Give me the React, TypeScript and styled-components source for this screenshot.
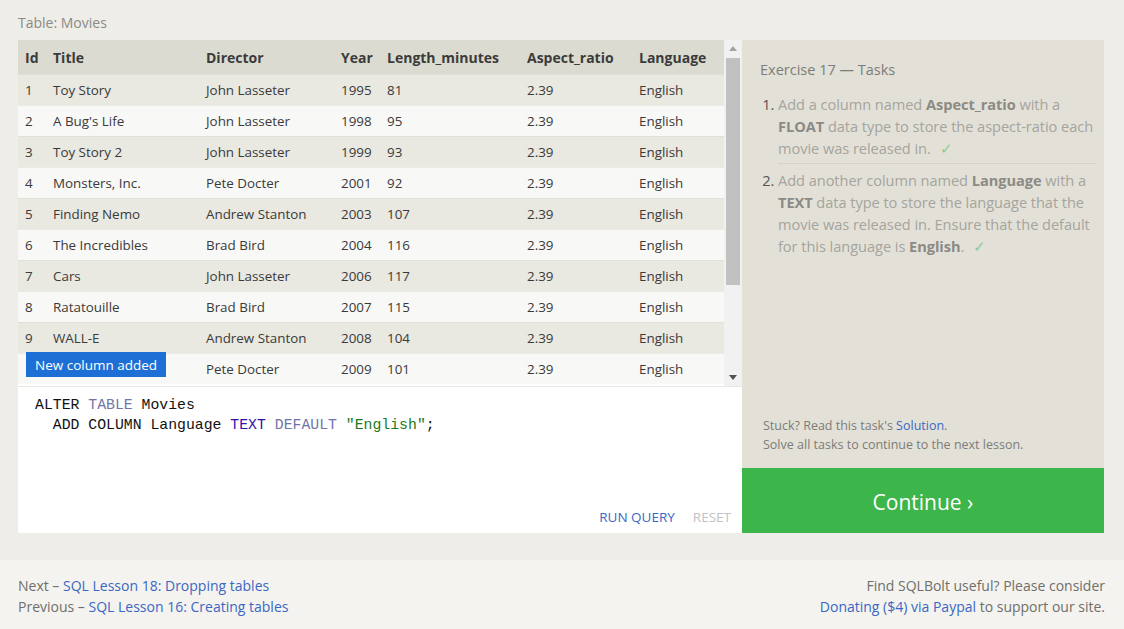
import React from "react";
import styled, { createGlobalStyle } from "styled-components";

const GlobalStyle = createGlobalStyle`
  html, body {
    margin: 0;
    padding: 0;
    background: #f4f3ef;
    font-family: "Open Sans", "Noto Sans", sans-serif;
  }
  * { box-sizing: border-box; }
`;

const Page = styled.div`
  width: 1124px;
  height: 629px;
  overflow: hidden;
  display: flex;
  flex-direction: column;
`;

const Main = styled.section`
  background: #efede7;
  padding: 13px 20px 27px 18px;
  height: 560px;
`;

const Caption = styled.div`
  font-size: 14px;
  color: #8a8a86;
  height: 27px;
  line-height: 20px;
`;

const Workspace = styled.div`
  display: flex;
  height: 493px;
`;

const LeftPane = styled.div`
  width: 724px;
  display: flex;
  flex-direction: column;
  background: #fff;
`;

const TableBox = styled.div`
  display: flex;
  height: 347px;
  border-bottom: 1px solid #e8e7e2;
`;

const Grid = styled.div`
  width: 706px;
  display: grid;
  grid-template-columns: 28px 153px 135px 46px 140px 112px 92px;
  grid-auto-rows: 31px;
  grid-template-rows: 34px;
  font-size: 13.4px;
  color: #3a3a3a;
`;

const HeadCell = styled.div`
  background: #dcdbd1;
  font-weight: 700;
  font-size: 14px;
  color: #3b3b3b;
  padding-left: 7px;
  display: flex;
  align-items: center;
`;

const Cell = styled.div<{ $odd: boolean }>`
  background: ${(p) => (p.$odd ? "#e9e8e1" : "#f8f8f6")};
  border-top: 1px solid ${(p) => (p.$odd ? "#e0dfd8" : "#ecebe6")};
  padding-left: 7px;
  display: flex;
  align-items: center;
  white-space: nowrap;
  position: relative;
`;

const Scrollbar = styled.div`
  width: 18px;
  background: #f1f1f1;
  display: flex;
  flex-direction: column;
  align-items: center;
`;

const Arrow = styled.div`
  height: 17px;
  display: flex;
  align-items: center;
  justify-content: center;
`;

const Thumb = styled.div`
  width: 14px;
  height: 227px;
  background: #c1c1c1;
  margin-top: 1px;
`;

const Spacer = styled.div`
  flex: 1;
`;

const Tooltip = styled.div`
  position: absolute;
  left: 8px;
  top: -2px;
  height: 25px;
  padding: 0 9px;
  background: #1d6fd6;
  color: #fff;
  font-size: 13.5px;
  display: flex;
  align-items: center;
  white-space: nowrap;
  z-index: 2;
`;

const Editor = styled.div`
  flex: 1;
  display: flex;
  flex-direction: column;
  padding: 9px 11px 7px 17px;
`;

const Code = styled.pre`
  margin: 0;
  flex: 1;
  font-family: "Liberation Mono", "DejaVu Sans Mono", monospace;
  font-size: 14.8px;
  line-height: 19.5px;
  color: #111;
`;

const Tok = styled.span<{ $c: string }>`
  color: ${(p) => p.$c};
`;

const Actions = styled.div`
  display: flex;
  justify-content: flex-end;
  gap: 18px;
  font-size: 13.5px;
`;

const ActionLink = styled.span<{ $muted?: boolean }>`
  color: ${(p) => (p.$muted ? "#c2c2c2" : "#3a67c4")};
`;

const RightPane = styled.div`
  width: 362px;
  display: flex;
  flex-direction: column;
`;

const Tasks = styled.div`
  flex: 1;
  background: #e3e1d7;
  padding: 20px 3px 14px 18px;
  display: flex;
  flex-direction: column;
`;

const TasksTitle = styled.div`
  font-size: 14.5px;
  color: #7c7c78;
  margin-bottom: 14px;
`;

const List = styled.ol`
  margin: 0;
  padding: 0 0 0 18px;
  flex: 1;
  color: #555;
  font-size: 14.6px;
  letter-spacing: -0.05px;
`;

const Item = styled.li<{ $last?: boolean }>`
  line-height: 22px;
  padding: 0 0 4px 0;
  margin: 0 5px 5px 0;
  border-bottom: ${(p) => (p.$last ? "none" : "1px solid #d4d2c8")};
`;

const ItemText = styled.span`
  color: #a5a49e;
  b { color: #8b8a85; font-weight: 700; }
`;

const Check = styled.span`
  color: #8cc99a;
  margin-left: 9px;
`;

const Hint = styled.div`
  font-size: 12.5px;
  color: #7c7c78;
  line-height: 19px;
  padding-left: 3px;
`;

const Link = styled.span`
  color: #3a67c4;
`;

const ContinueButton = styled.div`
  height: 65px;
  background: #3cb54a;
  color: #fff;
  font-size: 21px;
  display: flex;
  align-items: center;
  justify-content: center;
  padding-top: 2px;
`;

const Footer = styled.footer`
  flex: 1;
  display: flex;
  justify-content: space-between;
  padding: 15px 19px 0 18px;
  font-size: 14px;
  line-height: 21px;
  color: #6f6f6b;
`;

const FootRight = styled.div`
  text-align: right;
`;

const headers = ["Id", "Title", "Director", "Year", "Length_minutes", "Aspect_ratio", "Language"];

const movies: string[][] = [
  ["1", "Toy Story", "John Lasseter", "1995", "81"],
  ["2", "A Bug's Life", "John Lasseter", "1998", "95"],
  ["3", "Toy Story 2", "John Lasseter", "1999", "93"],
  ["4", "Monsters, Inc.", "Pete Docter", "2001", "92"],
  ["5", "Finding Nemo", "Andrew Stanton", "2003", "107"],
  ["6", "The Incredibles", "Brad Bird", "2004", "116"],
  ["7", "Cars", "John Lasseter", "2006", "117"],
  ["8", "Ratatouille", "Brad Bird", "2007", "115"],
  ["9", "WALL-E", "Andrew Stanton", "2008", "104"],
  ["10", "Up", "Pete Docter", "2009", "101"],
];

export default function App() {
  return (
    <Page>
      <GlobalStyle />
      <Main>
        <Caption>Table: Movies</Caption>
        <Workspace>
          <LeftPane>
            <TableBox>
              <Grid>
                {headers.map((h) => (
                  <HeadCell key={h}>{h}</HeadCell>
                ))}
                {movies.map((m, i) => {
                  const row = [...m, "2.39", "English"];
                  return row.map((v, j) => (
                    <Cell key={i + "-" + j} $odd={i % 2 === 0}>
                      {i === 9 && j === 0 ? <Tooltip>New column added</Tooltip> : null}
                      {v}
                    </Cell>
                  ));
                })}
              </Grid>
              <Scrollbar>
                <Arrow>
                  <svg width="8" height="5" viewBox="0 0 8 5">
                    <path d="M0 5 L4 0 L8 5 Z" fill="#a3a3a3" />
                  </svg>
                </Arrow>
                <Thumb />
                <Spacer />
                <Arrow>
                  <svg width="8" height="5" viewBox="0 0 8 5">
                    <path d="M0 0 L4 5 L8 0 Z" fill="#505050" />
                  </svg>
                </Arrow>
              </Scrollbar>
            </TableBox>
            <Editor>
              <Code>
                ALTER <Tok $c="#7076a8">TABLE</Tok> Movies{"\n"}
                {"  "}ADD COLUMN Language <Tok $c="#3311aa">TEXT</Tok>{" "}
                <Tok $c="#7076a8">DEFAULT</Tok> <Tok $c="#1a7a1a">"English"</Tok>;
              </Code>
              <Actions>
                <ActionLink>RUN QUERY</ActionLink>
                <ActionLink $muted>RESET</ActionLink>
              </Actions>
            </Editor>
          </LeftPane>
          <RightPane>
            <Tasks>
              <TasksTitle>Exercise 17 — Tasks</TasksTitle>
              <List>
                <Item>
                  <ItemText>
                    Add a column named <b>Aspect_ratio</b> with a <b>FLOAT</b> data type to store
                    the aspect-ratio each movie was released in.
                  </ItemText>
                  <Check>✓</Check>
                </Item>
                <Item $last>
                  <ItemText>
                    Add another column named <b>Language</b> with a <b>TEXT</b> data type to store
                    the language that the movie was released in. Ensure that the default for this
                    language is <b>English</b>.
                  </ItemText>
                  <Check>✓</Check>
                </Item>
              </List>
              <Hint>
                Stuck? Read this task's <Link>Solution</Link>.
                <br />
                Solve all tasks to continue to the next lesson.
              </Hint>
            </Tasks>
            <ContinueButton>Continue ›</ContinueButton>
          </RightPane>
        </Workspace>
      </Main>
      <Footer>
        <div>
          Next – <Link>SQL Lesson 18: Dropping tables</Link>
          <br />
          Previous – <Link>SQL Lesson 16: Creating tables</Link>
        </div>
        <FootRight>
          Find SQLBolt useful? Please consider
          <br />
          <Link>Donating ($4) via Paypal</Link> to support our site.
        </FootRight>
      </Footer>
    </Page>
  );
}
